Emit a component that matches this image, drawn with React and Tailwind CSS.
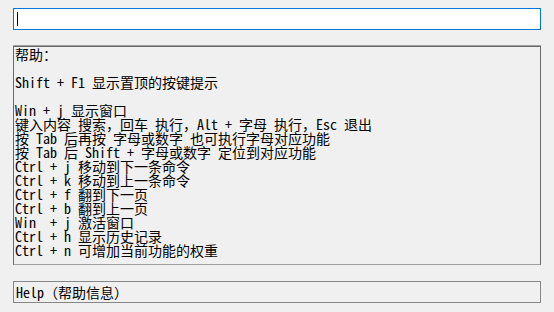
import React from "react";

const lines = [
  "帮助：",
  "",
  "Shift + F1 显示置顶的按键提示",
  "",
  "Win + j 显示窗口",
  "键入内容 搜索，回车 执行，Alt + 字母 执行，Esc 退出",
  "按 Tab 后再按 字母或数字 也可执行字母对应功能",
  "按 Tab 后 Shift + 字母或数字 定位到对应功能",
  "Ctrl + j 移动到下一条命令",
  "Ctrl + k 移动到上一条命令",
  "Ctrl + f 翻到下一页",
  "Ctrl + b 翻到上一页",
  "Win  + j 激活窗口",
  "Ctrl + h 显示历史记录",
  "Ctrl + n 可增加当前功能的权重",
];

export default function App() {
  return (
    <div className="w-[554px] h-[312px] bg-[#f0f0f0] pt-[8px] px-[13px] text-black font-['Noto_Sans_Mono_CJK_SC','Noto_Sans_CJK_SC','Liberation_Mono',monospace] text-[14px] leading-[14px]">
      <div className="h-[22px] border border-[#0078d7] bg-white flex items-start">
        <div className="ml-[3px] mt-[3px] w-px h-[14px] bg-black" />
      </div>
      <div className="mt-[15px] border-t border-[#a0a0a0]">
        <div className="h-[219px] border border-[#696969] border-b-[#a0a0a0] pl-[1px]">
          {lines.map((l, i) => (
            <div key={i} className="h-[14px] whitespace-pre">
              {l}
            </div>
          ))}
        </div>
      </div>
      <div className="mt-[16px] h-[22px] border border-[#868686] pl-[2px] pt-[3px] whitespace-pre">
        Help（帮助信息）
      </div>
    </div>
  );
}
